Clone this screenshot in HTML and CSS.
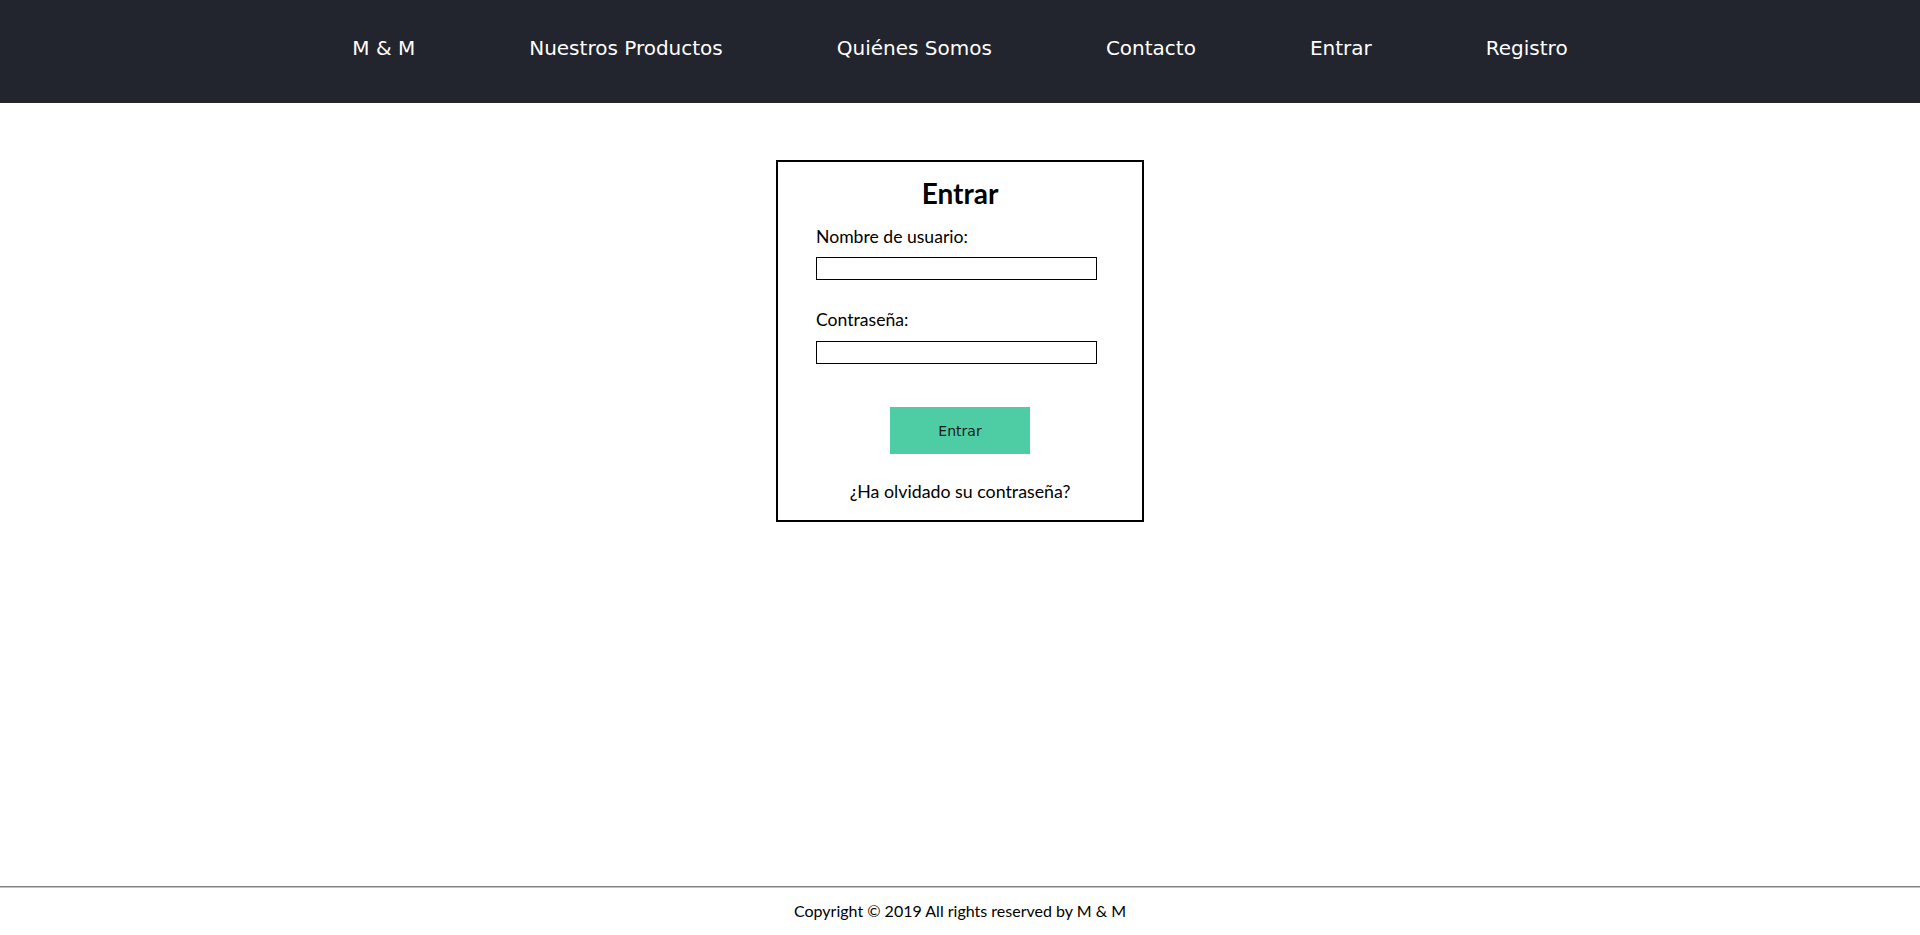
FILE: index.html
```html
<!DOCTYPE html>
<html lang="es">
<head>
<meta charset="utf-8">
<title>M &amp; M - Entrar</title>
<link rel="stylesheet" href="styles.css">
</head>
<body>
<header class="navbar">
  <nav>
    <ul class="nav-list">
      <li><a href="#">M &amp; M</a></li>
      <li><a href="#">Nuestros Productos</a></li>
      <li><a href="#">Quiénes Somos</a></li>
      <li><a href="#">Contacto</a></li>
      <li><a href="#">Entrar</a></li>
      <li><a href="#">Registro</a></li>
    </ul>
  </nav>
</header>
<main class="content">
  <section class="login-box">
    <h1 class="login-title">Entrar</h1>
    <form class="login-form">
      <label class="field-label" for="user">Nombre de usuario:</label>
      <input class="field-input" id="user" type="text">
      <label class="field-label second" for="pass">Contraseña:</label>
      <input class="field-input" id="pass" type="password">
      <div class="btn-row"><button class="btn-enter" type="button">Entrar</button></div>
      <p class="forgot">¿Ha olvidado su contraseña?</p>
    </form>
  </section>
</main>
<footer class="footer">
  <hr class="footer-rule">
  <p class="copyright">Copyright © 2019 All rights reserved by M &amp; M</p>
</footer>
</body>
</html>
```
FILE: styles.css
```css
html, body {
  margin: 0;
  padding: 0;
}
body {
  display: flex;
  flex-direction: column;
  min-height: 100vh;
  font-family: Lato, "Liberation Sans", sans-serif;
  color: #000;
  background: #fff;
}
.navbar {
  background: #22252e;
  height: 103px;
  box-sizing: border-box;
}
.nav-list {
  list-style: none;
  margin: 0;
  padding: 37px 0 0;
  display: flex;
  justify-content: center;
  gap: 114px;
}
.nav-list a {
  color: #fff;
  text-decoration: none;
  font-family: "DejaVu Sans", sans-serif;
  font-size: 20px;
  line-height: 23px;
}
.content {
  flex: 1;
  padding-top: 57px;
}
.login-box {
  width: 368px;
  box-sizing: border-box;
  margin: 0 auto;
  border: 2px solid #000;
  padding: 14px 38px 18px;
}
.login-title {
  margin: 0;
  text-align: center;
  font-size: 28px;
  font-weight: 700;
  line-height: 34px;
}
.login-form {
  display: flex;
  flex-direction: column;
}
.field-label {
  display: block;
  font-size: 17.6px;
  line-height: 22px;
  margin-top: 16px;
  margin-bottom: 9px;
}
.field-label.second {
  margin-top: 29px;
  margin-bottom: 10px;
}
.field-input {
  width: 281px;
  height: 23px;
  box-sizing: border-box;
  border: 1px solid #000;
  padding: 1px 2px;
  margin: 0;
  font-size: 14px;
}
.btn-row {
  display: flex;
  justify-content: center;
  margin-top: 43px;
}
.btn-enter {
  width: 140px;
  height: 47px;
  border: none;
  background: #4ecda4;
  color: #1a1a1a;
  font-family: "DejaVu Sans", sans-serif;
  font-size: 14px;
  padding: 0;
}
.forgot {
  margin: 26px 0 0;
  text-align: center;
  font-size: 17.8px;
  line-height: 22px;
}
.footer {
  height: 49px;
}
.footer-rule {
  margin: 0;
  height: 0;
  border: 0;
  border-top: 1px solid #808080;
  border-bottom: 1px solid #c4c4c4;
}
.copyright {
  margin: 0;
  padding-top: 13px;
  text-align: center;
  font-size: 16px;
  line-height: 19px;
}
```
